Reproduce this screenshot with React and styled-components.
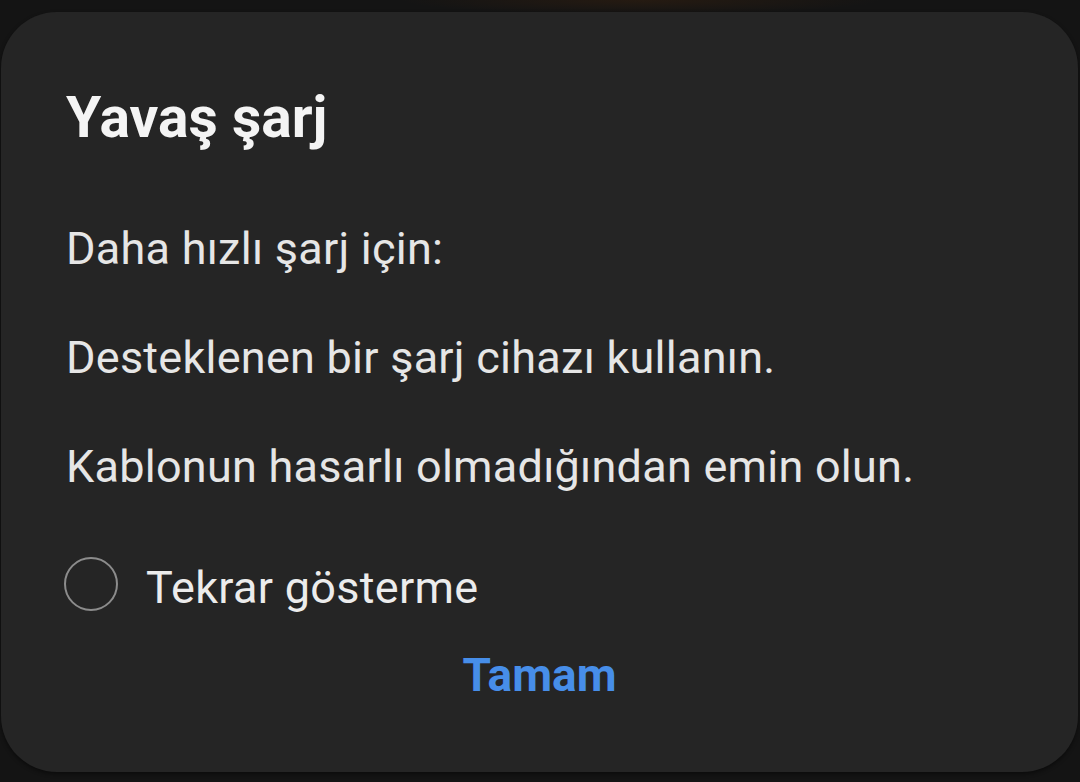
import styled, { createGlobalStyle } from "styled-components"

const GlobalStyle = createGlobalStyle`
    html, body {
        margin: 0;
        padding: 0;
        background-color: #141414;
    }
    body {
        width: 1080px;
        height: 782px;
        overflow: hidden;
        font-family: Roboto, "Noto Sans", sans-serif;
        background:
            radial-gradient(ellipse 240px 14px at 640px 0, rgba(70, 38, 12, 0.35), transparent),
            #141414;
    }
`

const App = () => {
    return (
        <>
            <GlobalStyle />
            <Page>
                <Dialog>
                    <Title>Yavaş şarj</Title>
                    <Body>
                        <Line>Daha hızlı şarj için:</Line>
                        <Line>Desteklenen bir şarj cihazı kullanın.</Line>
                        <Line>Kablonun hasarlı olmadığından emin olun.</Line>
                    </Body>
                    <CheckRow>
                        <Radio />
                        <CheckLabel>Tekrar gösterme</CheckLabel>
                    </CheckRow>
                    <Actions>
                        <TextButton>Tamam</TextButton>
                    </Actions>
                </Dialog>
            </Page>
        </>
    )
}

const Page = styled.div`
    height: 782px;
    padding: 12px 2px 0 1px;
    box-sizing: border-box;
`

const Dialog = styled.div`
    height: 760px;
    box-sizing: border-box;
    background-color: #252525;
    border-radius: 56px;
    padding: 72px 65px 0 65px;
    display: flex;
    flex-direction: column;
    box-shadow: 0 2px 4px rgba(0, 0, 0, 0.45);
`

const Title = styled.div`
    font-size: 57px;
    font-weight: 700;
    line-height: 68px;
    color: #f4f4f4;
`

const Body = styled.div`
    margin-top: 67px;
    display: flex;
    flex-direction: column;
    gap: 49px;
`

const Line = styled.div`
    font-size: 45px;
    letter-spacing: 0.25px;
    line-height: 60px;
    color: #e6e6e6;
    white-space: nowrap;
`

const CheckRow = styled.div`
    margin-top: 60px;
    display: flex;
    align-items: center;
    gap: 28px;
    margin-left: -2px;
`

const Radio = styled.div`
    width: 50px;
    height: 50px;
    border: 2px solid #8c8c8c;
    border-radius: 50%;
    margin-bottom: 7px;
    flex-shrink: 0;
`

const CheckLabel = styled.div`
    font-size: 45px;
    letter-spacing: 0.3px;
    line-height: 60px;
    color: #ececec;
`

const Actions = styled.div`
    margin-top: 27px;
    display: flex;
    justify-content: center;
`

const TextButton = styled.div`
    font-size: 46px;
    font-weight: 700;
    line-height: 60px;
    color: #478ee9;
`

export default App
